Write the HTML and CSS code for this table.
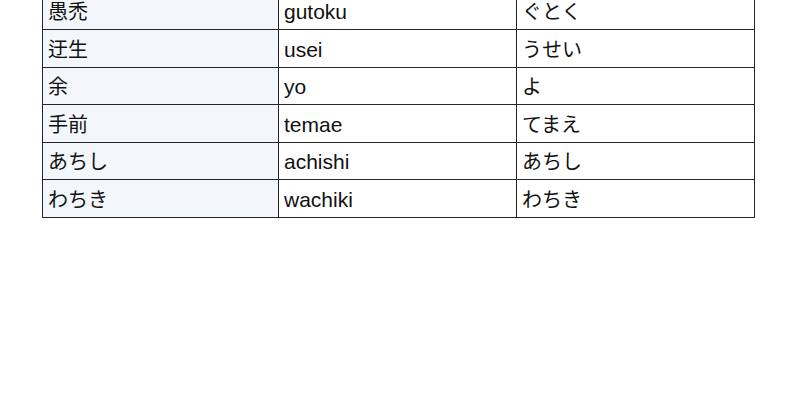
FILE: index.html
```html
<!DOCTYPE html>
<html lang="ja">
<head>
<meta charset="utf-8">
<link rel="stylesheet" href="styles.css">
</head>
<body>
<table class="words">
  <tbody>
    <tr><td class="kanji ja">愚禿</td><td>gutoku</td><td class="ja">ぐとく</td></tr>
    <tr><td class="kanji ja">迂生</td><td>usei</td><td class="ja">うせい</td></tr>
    <tr><td class="kanji ja">余</td><td>yo</td><td class="ja">よ</td></tr>
    <tr><td class="kanji ja">手前</td><td>temae</td><td class="ja">てまえ</td></tr>
    <tr><td class="kanji ja">あちし</td><td>achishi</td><td class="ja">あちし</td></tr>
    <tr><td class="kanji ja">わちき</td><td>wachiki</td><td class="ja">わちき</td></tr>
  </tbody>
</table>
</body>
</html>
```
FILE: styles.css
```css
html, body {
  margin: 0;
  padding: 0;
  background: #ffffff;
}
body {
  font-family: "Liberation Sans", "Noto Sans CJK JP", sans-serif;
  font-size: 21px;
  color: #111111;
}
.words {
  border-collapse: collapse;
  margin: -8.5px 0 0 42px;
  width: 713px;
  table-layout: fixed;
}
.words tr {
  height: 37.5px;
}
.words td {
  box-sizing: border-box;
  border: 1px solid #262626;
  padding: 3px 6px 0 5px;
  vertical-align: middle;
  line-height: 24px;
  white-space: nowrap;
}
.words td.ja {
  font-size: 20px;
}
.words td.kanji {
  background: #f3f7fb;
  width: 236px;
}
```
